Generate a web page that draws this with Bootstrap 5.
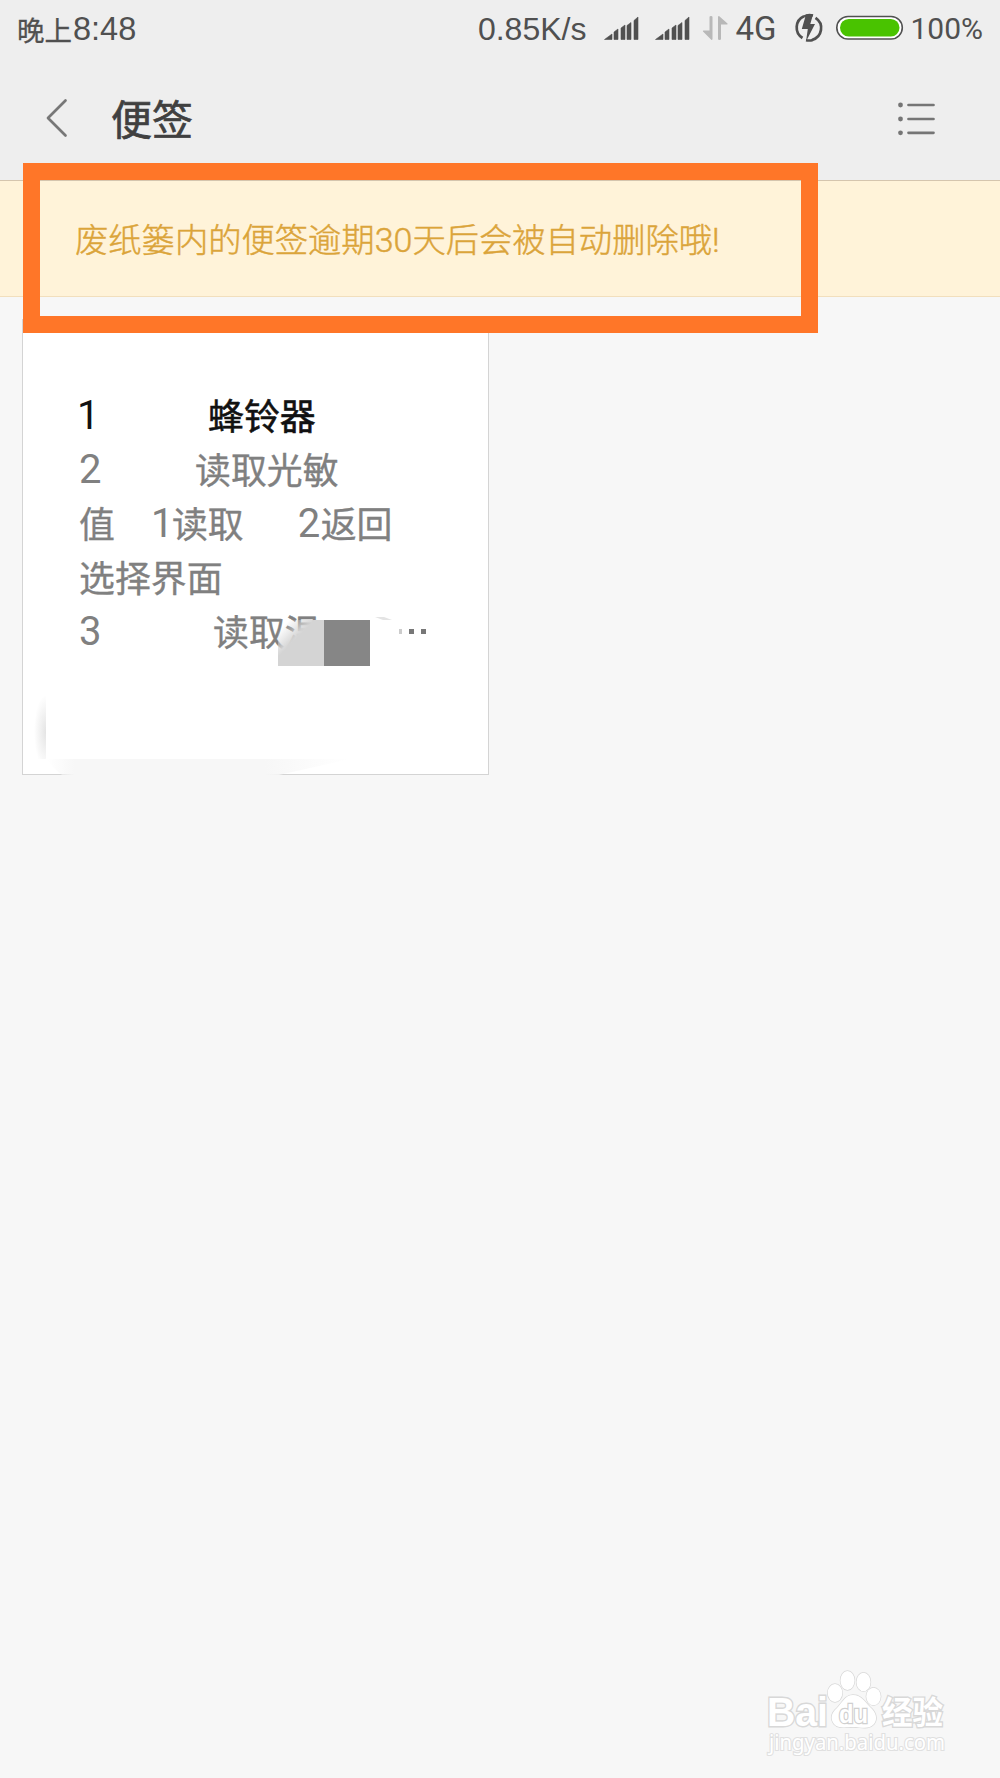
<!DOCTYPE html>
<html lang="zh-CN">
<head>
<meta charset="utf-8">
<meta name="viewport" content="width=device-width, initial-scale=1">
<title>便签</title>
<link href="https://cdn.jsdelivr.net/npm/bootstrap@5.3.0/dist/css/bootstrap.min.css" rel="stylesheet">
<style>
body{background:#f7f7f7;font-family:"Noto Sans CJK SC",sans-serif;min-height:1778px;color:#505050;overflow-x:hidden}
svg{display:block;flex:none}
.status-bar{height:58px;background:#eee;padding:0 17px 0 17px;line-height:58px;white-space:nowrap}
.clock-cn{font-size:27.5px;-webkit-text-stroke:.3px #505050}
.helv{font-family:"Liberation Sans",sans-serif;font-size:32px}
.clock-num{font-size:32.5px;margin-left:1px}
.robo{font-family:Roboto,sans-serif}
.net-type{font-size:33px}
.percent{font-size:30px}
.title-bar{height:123px;background:#eee;border-bottom:1px solid #d5c5ae;padding:0 64px 0 45px}
.title-text{font-size:41px;line-height:60px;font-weight:400;color:#404040;-webkit-text-stroke:.7px #404040;margin:0 0 5px 42px}
.notice{height:116px;background:#fff3d9;border-bottom:1px solid #f2dfbd;padding-left:75px;color:#dba43a;font-size:33.3px;line-height:50px;white-space:nowrap;font-weight:300;-webkit-text-stroke:.45px #dba43a}
.notice .robo{font-size:34px}
.memo{width:467px;height:456px;margin:22px 0 0 22px;background:#fff;border:1px solid #d4d4d4;border-radius:0;padding:67px 0 0 56px;position:relative}
.memo-line{height:54px;line-height:54px;font-size:35.9px;color:#808080;white-space:nowrap;-webkit-text-stroke:.35px #808080}
.memo-line .robo{font-size:40px;line-height:58px;width:23px;-webkit-text-stroke:0}
.memo-line .one-digit{width:21px}
.memo-line.first-line{color:#111;-webkit-text-stroke:.6px #111}
.first-line .robo{margin-left:-2px}
.gap-a{margin-left:108px}.gap-b{margin-left:93px}.gap-c{margin-left:36px}.gap-d{margin-left:54px}.gap-e{margin-left:111px}
.smudge{position:absolute;left:-1px;top:-1px}
.frame{position:absolute;left:23px;top:163px;width:794.5px;height:169.5px;border:17px solid #ff7628}
.brand{position:absolute;left:750px;top:1650px}
</style>
<script src="https://cdn.jsdelivr.net/npm/bootstrap@5.3.0/dist/js/bootstrap.bundle.min.js"></script>
</head>
<body class="position-relative">
<header>
 <div class="status-bar d-flex align-items-center">
  <span class="clock-cn">晚上</span><span class="helv clock-num">8:48</span>
  <div class="d-flex align-items-center ms-auto">
   <span class="helv">0.85K/s</span>
   <svg width="149" height="58" viewBox="585 0 149 58">
    <path d="M603.500 39.500 611 34V39.500ZM613 32l4-3V39.500h-4ZM620 28l4-3V39.500h-4ZM626 25.500l4-3V39.500h-4ZM633 20.500l4-3.500V39.500h-4Z" fill="#505050" stroke="#505050" stroke-width=".6"/>
    <path d="M654.500 39.500 662 34V39.500ZM664 32l4-3V39.500h-4ZM671 28l4-3V39.500h-4ZM677 25.500l4-3V39.500h-4ZM684 20.500l4-3.500V39.500h-4Z" fill="#505050" stroke="#505050" stroke-width=".6"/>
    <path d="M708.500 17q0-1 1.500-1t1.500 1V39q0 1-1 1L702 31.500q-.5-1 .5-1h6ZM720 39q0 1-1.500 1t-1.500-1V17q0-1 1-1l8.500 7.500q.5 1-.5 1h-6Z" fill="#b8b8b8"/>
   </svg>
   <span class="robo net-type">4G</span>
   <svg width="134" height="58" viewBox="776 0 134 58">
    <path d="M804 16.300A12.300 12.300 0 0 0 802.500 38M812 40A12.300 12.300 0 0 0 815.500 17.800" fill="none" stroke="#505050" stroke-width="2.700"/>
    <path d="M806 14.500h7l-2.700 9.500h4.700L806 41.500l1.800-12.500h-6Z" fill="#505050"/><path d="M804 16.500q4-2.300 9-1M806 40.300q4 .8 7-.5" stroke="#505050" stroke-width="2.500" fill="none"/>
    <rect x="836.800" y="16.500" width="65.500" height="22.500" rx="11.200" fill="#fff" stroke="#505050" stroke-width="1.600"/><rect x="840" y="19" width="59.500" height="17.500" rx="8.700" fill="#49c300"/>
   </svg>
   <span class="robo percent">100%</span>
  </div>
 </div>
 <div class="title-bar d-flex align-items-center">
  <svg width="24" height="42" viewBox="0 0 24 42"><path d="M20.500 2.500 3 20 20.500 37.500" fill="none" stroke="#777" stroke-width="2.700" stroke-linecap="round" stroke-linejoin="round"/></svg>
  <h1 class="title-text">便签</h1>
  <svg class="ms-auto" width="40" height="36" viewBox="0 0 40 36"><path d="M12.500 4h25M12.500 18h25M12.500 31.800h25" stroke="#757575" stroke-width="2.700" stroke-linecap="round"/><g fill="#757575"><circle cx="4.500" cy="4" r="2.400"/><circle cx="4.500" cy="18" r="2.400"/><circle cx="4.500" cy="31.800" r="2.400"/></g></svg>
 </div>
</header>
<main>
 <div class="notice d-flex align-items-center"><span>废纸篓内的便签逾期<span class="robo">30</span>天后会被自动删除哦<span class="robo">!</span></span></div>
 <article class="card memo">
  <div class="memo-line first-line d-flex"><span class="robo">1</span><span class="gap-a">蜂铃器</span></div>
  <div class="memo-line d-flex"><span class="robo">2</span><span class="gap-b">读取光敏</span></div>
  <div class="memo-line d-flex"><span>值</span><span class="robo one-digit gap-c">1</span><span>读取</span><span class="robo gap-d">2</span><span>返回</span></div>
  <div class="memo-line d-flex">选择界面</div>
  <div class="memo-line d-flex"><span class="robo">3</span><span class="gap-e">读取温</span></div>
  <svg class="smudge" width="467" height="458" viewBox="22 319 467 458">
   <defs>
    <filter id="soft" x="-30%" y="-30%" width="160%" height="160%"><feGaussianBlur stdDeviation="3"/></filter>
    <linearGradient id="foot"><stop stop-color="#f7f7f7" stop-opacity="0"/><stop offset=".09" stop-color="#f7f7f7"/><stop offset=".72" stop-color="#f7f7f7"/><stop offset="1" stop-color="#f7f7f7" stop-opacity="0"/></linearGradient>
    <linearGradient id="tile" x1="0" y1="0" x2="1" y2="1"><stop offset=".12" stop-color="#d4d4d4" stop-opacity="0"/><stop offset=".4" stop-color="#d4d4d4"/></linearGradient>
    <radialGradient id="leftfade"><stop stop-color="#e4e4e4"/><stop offset="1" stop-color="#fff"/></radialGradient>
    <clipPath id="leftclip"><path d="M30 690h16v69H30Z"/></clipPath>
   </defs>
   <path d="M272 657 290 642 301 629 325 623V674H272Z" fill="#fff" filter="url(#soft)"/>
   <path d="M317 600h80v28H317Z" fill="#fff"/>
   <path d="M278 620H324V666H278Z" fill="url(#tile)"/>
   <path d="M324 620h46v46h-46Z" fill="#868686"/>
   <path d="M375 617h9l8 3h-9Z" fill="#e4e4e4"/>
   <path d="M399 629h3v5h-3Z" fill="#ccc"/><path d="M409 629h5v5h-5ZM421 629h5v5h-5Z" fill="#777"/>
   <ellipse cx="46" cy="732" rx="12" ry="37" fill="url(#leftfade)" clip-path="url(#leftclip)"/>
   <path d="M47 759H350L270 777H65Q54 770 47 759Z" fill="url(#foot)"/>
  </svg>
 </article>
</main>
<div class="frame"></div>
<svg class="brand" width="220" height="120" viewBox="0 0 220 120">
 <g fill="#fff" stroke="#d8d8d8" stroke-width="1.400" paint-order="stroke">
  <text x="17" y="76" font-family="Liberation Sans,sans-serif" font-weight="700" font-size="40" textLength="61" lengthAdjust="spacingAndGlyphs" stroke-width="2.800">Bai</text>
  <ellipse cx="85" cy="43" rx="7.300" ry="9"/><ellipse cx="97.500" cy="30.500" rx="7" ry="9.500"/><ellipse cx="113.500" cy="32" rx="7" ry="9.200"/><ellipse cx="123.500" cy="46.500" rx="7.200" ry="8.700"/>
  <path d="M103 45C95 45 92 53 87 58C81 63 80 69 84 74C88 79 97 77 103 77C111 77 119 80 124 74C128 69 126 62 120 57C114 51 111 45 103 45Z"/>
  <text x="89" y="73" font-family="Liberation Sans,sans-serif" font-weight="700" font-size="25" textLength="29" lengthAdjust="spacingAndGlyphs" stroke="#d0d0d0" stroke-width="2.500">du</text>
  <text x="132" y="74" font-family="Noto Sans CJK SC,sans-serif" font-weight="700" font-size="32" textLength="61" lengthAdjust="spacingAndGlyphs" stroke-width="2.800">经验</text>
  <text x="19" y="100" font-family="Noto Sans,sans-serif" font-size="21" textLength="176" lengthAdjust="spacingAndGlyphs" stroke="#e0e0e0" stroke-width="2.200">jingyan.baidu.com</text>
 </g>
</svg>
</body>
</html>
